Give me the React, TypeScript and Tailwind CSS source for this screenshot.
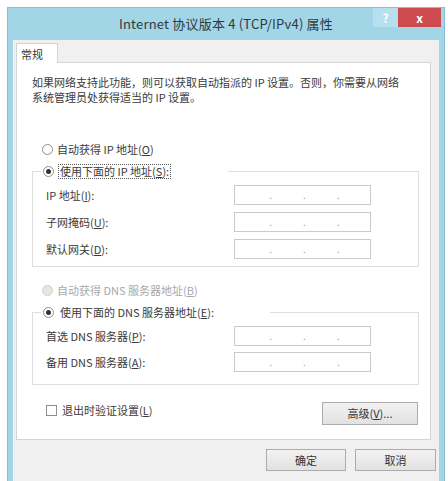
import React from 'react';

const font = { fontFamily: '"Noto Sans CJK SC", "Noto Sans", sans-serif' };

function IpBox() {
  return (
    <div className="w-[137px] h-[20px] bg-white border border-[#c9c9c9] flex items-center justify-center gap-[31px] pl-[4px]">
      <span className="text-[10px] leading-none text-[#9a9a9a]">.</span>
      <span className="text-[10px] leading-none text-[#9a9a9a]">.</span>
      <span className="text-[10px] leading-none text-[#9a9a9a]">.</span>
    </div>
  );
}

function Radio({ checked, disabled }: { checked?: boolean; disabled?: boolean }) {
  return (
    <span
      className={
        'w-[11px] h-[11px] rounded-full border flex items-center justify-center shrink-0 ' +
        (disabled ? 'border-[#cfcfcf] bg-[#e6e6e6]' : 'border-[#8f8f8f] bg-white')
      }
    >
      {checked && <span className="w-[5px] h-[5px] rounded-full bg-[#333]" />}
    </span>
  );
}

function Field({ label, keyChar }: { label: string; keyChar: string }) {
  return (
    <div className="flex items-center h-[20px]">
      <span className="w-[201px] pl-[13px] text-[11px] text-[#3a3a3a]">
        {label}(<span className="underline">{keyChar}</span>):
      </span>
      <IpBox />
    </div>
  );
}

function WinButton({ children, className }: { children: React.ReactNode; className?: string }) {
  return (
    <button
      className={
        'h-[22px] border border-[#acacac] bg-gradient-to-b from-[#f2f2f2] to-[#e2e2e2] text-[11px] text-[#333] flex items-center justify-center ' +
        (className || '')
      }
    >
      {children}
    </button>
  );
}

export default function App() {
  return (
    <div className="w-[448px] h-[481px] bg-white pt-[7px] pl-[7px] overflow-hidden" style={font}>
      <div className="w-[438px] h-[480px] bg-[#a2d5e6] border border-[#86bfd3] flex flex-col">
        {/* title bar */}
        <div className="relative h-[32px] flex items-center justify-center">
          <span className="text-[13px] text-[#2f3a40] tracking-[0.2px]">Internet 协议版本 4 (TCP/IPv4) 属性</span>
          <div className="absolute top-0 right-[3px] flex">
            <div className="w-[25px] h-[19px] bg-[#b6e0ee] flex items-center justify-center text-[12px] font-bold text-white">?</div>
            <div className="w-[43px] h-[19px] bg-[#cd4b4e] flex items-center justify-center text-[12px] font-bold text-white">x</div>
          </div>
        </div>

        {/* client */}
        <div className="mx-[5px] flex-1 bg-[#f0f0f0] pl-[3px] pr-[6px] pt-[3px] flex flex-col">
          <div className="w-[42px] h-[20px] bg-white border border-b-0 border-[#d4d4d4] px-[4px] pt-[2px] text-[11px] text-[#333] -mb-px relative z-10">
            常规
          </div>
          <div className="w-[415px] h-[378px] bg-white border border-[#d4d4d4] pl-[15px] pt-[12px] flex flex-col">
            <p className="text-[11px] leading-[15px] text-[#3a3a3a]">
              如果网络支持此功能，则可以获取自动指派的 IP 设置。否则，你需要从网络
              <br />
              系统管理员处获得适当的 IP 设置。
            </p>

            <div className="mt-[36px] h-[16px] pl-[10px] flex items-center gap-[4px] text-[11px] text-[#3a3a3a]">
              <Radio />
              <span>
                自动获得 IP 地址(<span className="underline">O</span>)
              </span>
            </div>

            <fieldset className="mt-[6px] w-[387px] border border-[#dedede] pb-[7px]">
              <legend className="ml-[8px] w-[187px] h-[16px] pl-[2px] flex items-center gap-[4px] text-[11px] text-[#3a3a3a] bg-white">
                <Radio checked />
                <span className="border border-dotted border-[#555] px-[1px] leading-[13px]">
                  使用下面的 IP 地址(<span className="underline">S</span>):
                </span>
              </legend>
              <div className="mt-[6px] flex flex-col gap-[7px]">
                <Field label="IP 地址" keyChar="I" />
                <Field label="子网掩码" keyChar="U" />
                <Field label="默认网关" keyChar="D" />
              </div>
            </fieldset>

            <div className="mt-[15px] h-[16px] pl-[10px] flex items-center gap-[4px] text-[11px] text-[#a8a8a8]">
              <Radio disabled />
              <span>
                自动获得 DNS 服务器地址(<span className="underline">B</span>)
              </span>
            </div>

            <fieldset className="mt-[6px] w-[387px] border border-[#dedede] pb-[12px]">
              <legend className="ml-[8px] w-[229px] h-[16px] pl-[2px] flex items-center gap-[4px] text-[11px] text-[#3a3a3a] bg-white">
                <Radio checked />
                <span className="px-[2px]">
                  使用下面的 DNS 服务器地址(<span className="underline">E</span>):
                </span>
              </legend>
              <div className="mt-[6px] flex flex-col gap-[6px]">
                <Field label="首选 DNS 服务器" keyChar="P" />
                <Field label="备用 DNS 服务器" keyChar="A" />
              </div>
            </fieldset>

            <div className="mt-[17px] w-[387px] flex items-start justify-between">
              <div className="pl-[14px] flex items-center gap-[5px] text-[11px] text-[#3a3a3a]">
                <span className="w-[11px] h-[11px] border border-[#8f8f8f] bg-white" />
                <span>
                  退出时验证设置(<span className="underline">L</span>)
                </span>
              </div>
              <WinButton className="w-[96px] h-[23px] mr-[1px]">
                高级(<span className="underline">V</span>)...
              </WinButton>
            </div>
          </div>

          <div className="mt-[9px] flex justify-end gap-[9px]">
            <WinButton className="w-[80px]">确定</WinButton>
            <WinButton className="w-[81px] -mr-[3px]">取消</WinButton>
          </div>
        </div>
      </div>
    </div>
  );
}
